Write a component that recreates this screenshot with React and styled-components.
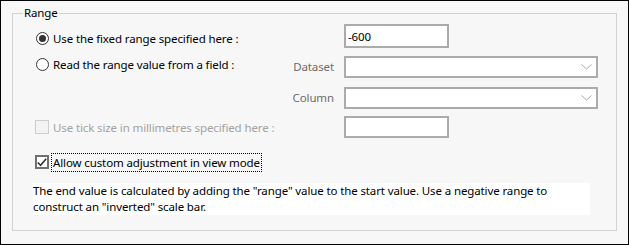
import React from "react";
import styled, { createGlobalStyle } from "styled-components";

const GlobalStyle = createGlobalStyle`
  html, body {
    margin: 0;
    padding: 0;
    background: #fff;
  }
  body {
    font-family: "Noto Sans", "Open Sans", sans-serif;
    font-size: 11.5px;
    letter-spacing: -0.12px;
    color: #000;
  }
`;

const Window = styled.div`
  box-sizing: border-box;
  width: 629px;
  height: 245px;
  border: 1px solid #000;
  background: #f7f7f7;
  padding: 4px 11px 0 11px;
`;

const Group = styled.fieldset`
  box-sizing: border-box;
  margin: 0;
  padding: 0;
  width: 605px;
  height: 226px;
  border: 1px solid #d2d2d2;
`;

const Legend = styled.legend`
  margin-left: 10px;
  padding: 0 1px;
  line-height: 16px;
`;

const Body = styled.div`
  padding: 3px 0 0 20px;
`;

const Grid = styled.div`
  display: grid;
  margin-left: 2px;
  grid-template-columns: 245px 44px 254px;
  grid-template-rows: 32px 31px 29px 22px;
  column-gap: 10px;
  align-items: start;
`;

const Option = styled.label`
  display: flex;
  align-items: center;
  gap: 4px;
  height: ${p => p.$h || 16}px;
  margin-top: ${p => p.$top || 0}px;
  color: ${p => (p.$disabled ? "#a2a2a2" : "#000")};
  white-space: nowrap;
`;

const Radio = styled.span`
  box-sizing: border-box;
  position: relative;
  flex: none;
  width: 13px;
  height: 13px;
  margin-left: 1px;
  border: 1px solid #333;
  border-radius: 50%;
  background: #fff;

  &::after {
    content: "";
    display: ${p => (p.$checked ? "block" : "none")};
    position: absolute;
    left: 2px;
    top: 2px;
    width: 7px;
    height: 7px;
    border-radius: 50%;
    background: #333;
  }
`;

const Box = styled.span`
  box-sizing: border-box;
  flex: none;
  display: flex;
  align-items: center;
  justify-content: center;
  width: 14px;
  height: 14px;
  border: ${p => (p.$disabled ? "1px solid #cdcdcd" : "2px solid #707070")};
  background: ${p => (p.$disabled ? "#f3f3f3" : "#fff")};
`;

const Label = styled.span`
  justify-self: end;
  line-height: 22px;
  color: #6d6d6d;
`;

const TextBox = styled.input`
  box-sizing: border-box;
  width: 105px;
  height: ${p => p.$h}px;
  margin: 0;
  padding: 0 2px;
  border: 2px solid #ababab;
  background: #fff;
  font: inherit;
  letter-spacing: inherit;
  color: #000;
  outline: none;
`;

const Combo = styled.div`
  box-sizing: border-box;
  display: flex;
  align-items: center;
  justify-content: flex-end;
  width: 254px;
  height: 22px;
  padding-right: 4px;
  border: 2px solid #ababab;
  background: #fff;
`;

const CheckRow = styled.label`
  display: flex;
  align-items: center;
  gap: 2px;
  height: 20px;
  margin: 14px 0 0 2px;
`;

const FocusText = styled.span`
  padding: 0 1px;
  line-height: 17px;
  border: 1px dotted #000;
  white-space: nowrap;
`;

const Note = styled.p`
  box-sizing: border-box;
  width: 557px;
  height: 32px;
  margin: 11px 0 0 0;
  line-height: 16px;
  background: #fff;
`;

const Chevron = () => (
  <svg width="11" height="6" viewBox="0 0 11 6">
    <polyline points="0.5,0.5 5.5,5 10.5,0.5" fill="none" stroke="#a8a8a8" strokeWidth="1" />
  </svg>
);

const Check = () => (
  <svg width="10" height="9" viewBox="0 0 10 9">
    <polyline points="0.8,4.5 3.6,7.3 9.2,0.8" fill="none" stroke="#333" strokeWidth="1.6" />
  </svg>
);

export default function App() {
  return (
    <>
      <GlobalStyle />
      <Window>
        <Group>
          <Legend>Range</Legend>
          <Body>
            <Grid>
              <Option $top={6}>
                <Radio $checked />
                Use the fixed range specified here :
              </Option>
              <span />
              <TextBox $h={24} readOnly defaultValue="-600" />

              <Option>
                <Radio />
                Read the range value from a field :
              </Option>
              <Label>Dataset</Label>
              <Combo>
                <Chevron />
              </Combo>

              <span />
              <Label>Column</Label>
              <Combo>
                <Chevron />
              </Combo>

              <Option $disabled $h={22}>
                <Box $disabled />
                Use tick size in millimetres specified here :
              </Option>
              <span />
              <TextBox $h={22} readOnly defaultValue="" />
            </Grid>

            <CheckRow>
              <Box>
                <Check />
              </Box>
              <FocusText>Allow custom adjustment in view mode</FocusText>
            </CheckRow>

            <Note>
              The end value is calculated by adding the "range" value to the start value. Use a negative range to
              construct an "inverted" scale bar.
            </Note>
          </Body>
        </Group>
      </Window>
    </>
  );
}
